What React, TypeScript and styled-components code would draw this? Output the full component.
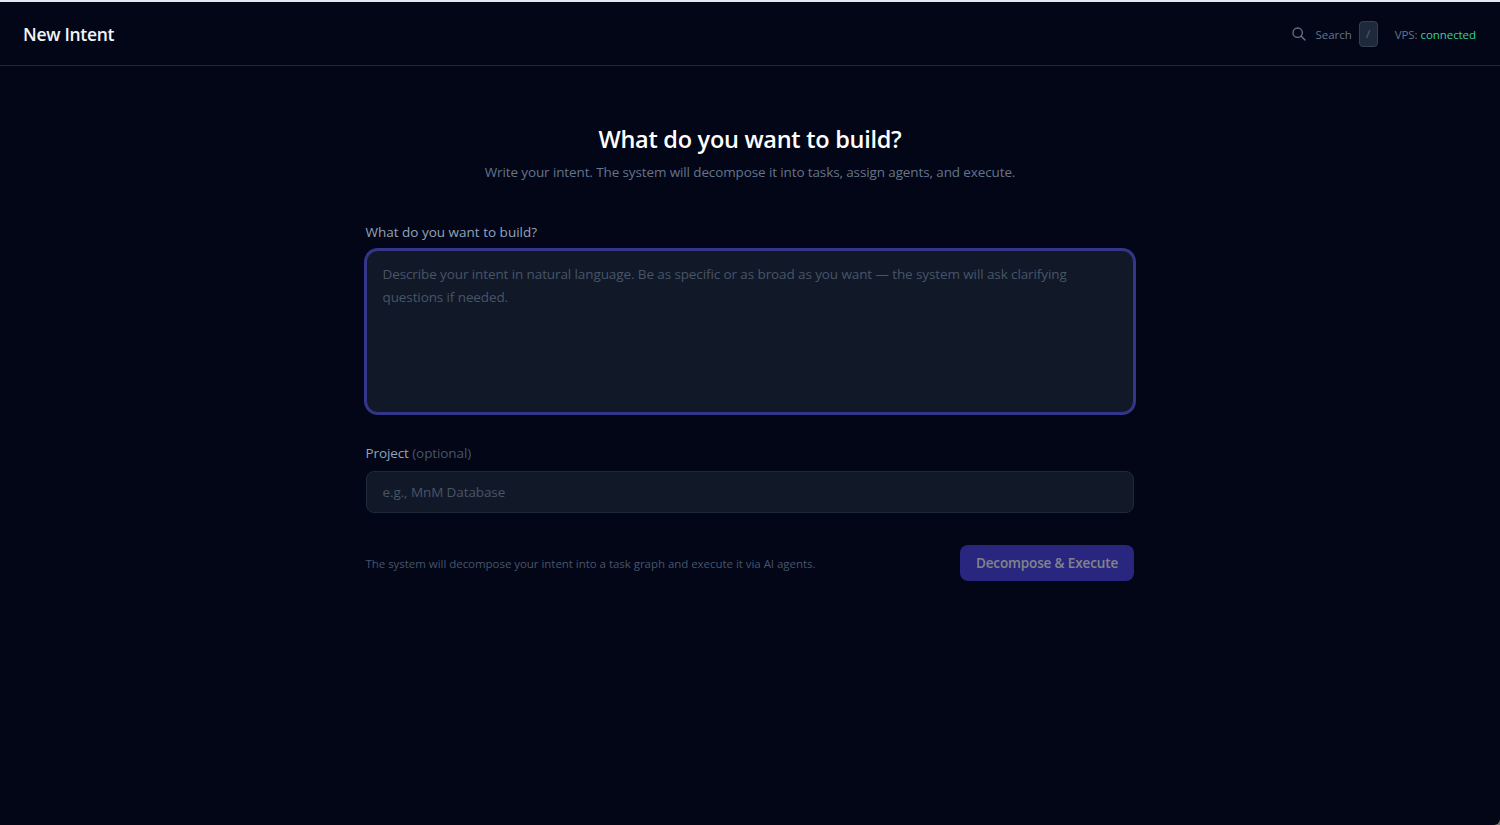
import * as React from "react";
import styled, { createGlobalStyle } from "styled-components";

const GlobalStyle = createGlobalStyle`
	* {
		box-sizing: border-box;
	}
	body {
		margin: 0;
		background: #77756f;
		font-family: "Open Sans", "Noto Sans", sans-serif;
	}
	h1, h2, p {
		margin: 0;
	}
`;

const TopStrip = styled.div`
	height: 2px;
	background: #e2e8f0;
`;

const Page = styled.div`
	height: 823px;
	background: #020617;
	border-bottom-right-radius: 6px;
	overflow: hidden;
`;

const Header = styled.header`
	display: flex;
	align-items: center;
	justify-content: space-between;
	height: 64px;
	padding: 0 24px 0 23px;
	border-bottom: 1px solid #1e293b;
`;

const HeaderTitle = styled.h1`
	font-size: 17.5px;
	font-weight: 600;
	line-height: 28px;
	letter-spacing: -0.3px;
	color: #f1f5f9;
`;

const HeaderActions = styled.div`
	display: flex;
	align-items: center;
	gap: 17px;
	font-size: 11.5px;
	line-height: 16px;
	letter-spacing: -0.06px;
	color: #64748b;
`;

const HeaderText = styled.span`
	padding-top: 2px;
`;

const SearchButton = styled.button`
	display: flex;
	align-items: center;
	gap: 8px;
	padding: 0;
	border: none;
	background: none;
	color: inherit;
	font: inherit;
	letter-spacing: inherit;
`;

const Kbd = styled.kbd`
	display: flex;
	align-items: center;
	justify-content: center;
	width: 19px;
	height: 26px;
	margin-left: -1px;
	border: 1px solid #334155;
	border-radius: 4px;
	background: #1e293b;
	color: #56657b;
	font: inherit;
`;

const Connected = styled.span`
	color: #34d399;
`;

const Main = styled.main`
	width: 768px;
	margin: 0 auto;
	padding-top: 57px;
`;

const Intro = styled.div`
	text-align: center;
	margin-bottom: 40px;
`;

const Heading = styled.h2`
	font-size: 23.5px;
	font-weight: 600;
	line-height: 32px;
	letter-spacing: -0.27px;
	color: #fff;
`;

const Subtitle = styled.p`
	margin-top: 7px;
	font-size: 13.5px;
	line-height: 20px;
	letter-spacing: -0.12px;
	color: #64748b;
`;

const Field = styled.div<{ $gap: number }>`
	display: flex;
	flex-direction: column;
	margin-bottom: ${(p) => p.$gap}px;
`;

const Label = styled.label<{ $tight?: boolean }>`
	margin: 0 0 8px -0.5px;
	font-size: 13.5px;
	line-height: 20px;
	letter-spacing: ${(p) => (p.$tight ? "-0.1px" : "0")};
	color: #94a3b8;
`;

const Optional = styled.span`
	color: #475569;
`;

const IntentInput = styled.textarea`
	height: 163px;
	padding: 12px 15.5px;
	border: 1px solid #34368a;
	border-radius: 12px;
	outline: none;
	resize: none;
	background: #111827;
	box-shadow: 0 0 0 2px #34368a;
	font-family: inherit;
	font-size: 13.5px;
	line-height: 22.75px;
	letter-spacing: -0.105px;

	&::placeholder {
		color: #475569;
	}
`;

const ProjectInput = styled.input`
	height: 42px;
	padding: 0 15.5px;
	border: 1px solid #1e293b;
	border-radius: 8px;
	outline: none;
	background: #111827;
	font-family: inherit;
	font-size: 13.5px;
	letter-spacing: -0.1px;

	&::placeholder {
		color: #475569;
	}
`;

const Footer = styled.div`
	display: flex;
	align-items: center;
	justify-content: space-between;
`;

const Hint = styled.p`
	padding-top: 2px;
	margin-left: -0.5px;
	font-size: 11.5px;
	line-height: 16px;
	letter-spacing: -0.04px;
	color: #475569;
`;

const SubmitButton = styled.button`
	width: 174px;
	height: 36px;
	padding: 0;
	border: none;
	border-radius: 8px;
	background: #4f46e5;
	color: #fff;
	font-family: inherit;
	font-size: 13.5px;
	font-weight: 600;
	letter-spacing: -0.13px;
	opacity: 0.5;
`;

const SearchSvg = styled.svg`
	margin-right: 1px;
`;

function SearchIcon() {
	return (
		<SearchSvg
			width="16"
			height="16"
			viewBox="0 0 24 24"
			fill="none"
			stroke="currentColor"
			strokeWidth="2"
			strokeLinecap="round"
			strokeLinejoin="round"
		>
			<path d="M21 21l-6-6m2-5a7 7 0 11-14 0 7 7 0 0114 0z" />
		</SearchSvg>
	);
}

export default function App() {
	const [intent, setIntent] = React.useState("");
	const [project, setProject] = React.useState("");

	return (
		<>
			<GlobalStyle />
			<TopStrip />
			<Page>
				<Header>
					<HeaderTitle>New Intent</HeaderTitle>
					<HeaderActions>
						<SearchButton>
							<SearchIcon />
							<HeaderText>Search</HeaderText>
							<Kbd>/</Kbd>
						</SearchButton>
						<HeaderText>
							VPS: <Connected>connected</Connected>
						</HeaderText>
					</HeaderActions>
				</Header>
				<Main>
					<Intro>
						<Heading>What do you want to build?</Heading>
						<Subtitle>
							Write your intent. The system will decompose it into tasks, assign
							agents, and execute.
						</Subtitle>
					</Intro>
					<Field $gap={30}>
						<Label htmlFor="intent">What do you want to build?</Label>
						<IntentInput
							id="intent"
							value={intent}
							onChange={(e) => setIntent(e.target.value)}
							placeholder="Describe your intent in natural language. Be as specific or as broad as you want — the system will ask clarifying questions if needed."
						/>
					</Field>
					<Field $gap={32}>
						<Label htmlFor="project" $tight>
							Project <Optional>(optional)</Optional>
						</Label>
						<ProjectInput
							id="project"
							value={project}
							onChange={(e) => setProject(e.target.value)}
							placeholder="e.g., MnM Database"
						/>
					</Field>
					<Footer>
						<Hint>
							The system will decompose your intent into a task graph and execute
							it via AI agents.
						</Hint>
						<SubmitButton disabled={!intent.trim()}>
							Decompose &amp; Execute
						</SubmitButton>
					</Footer>
				</Main>
			</Page>
		</>
	);
}
